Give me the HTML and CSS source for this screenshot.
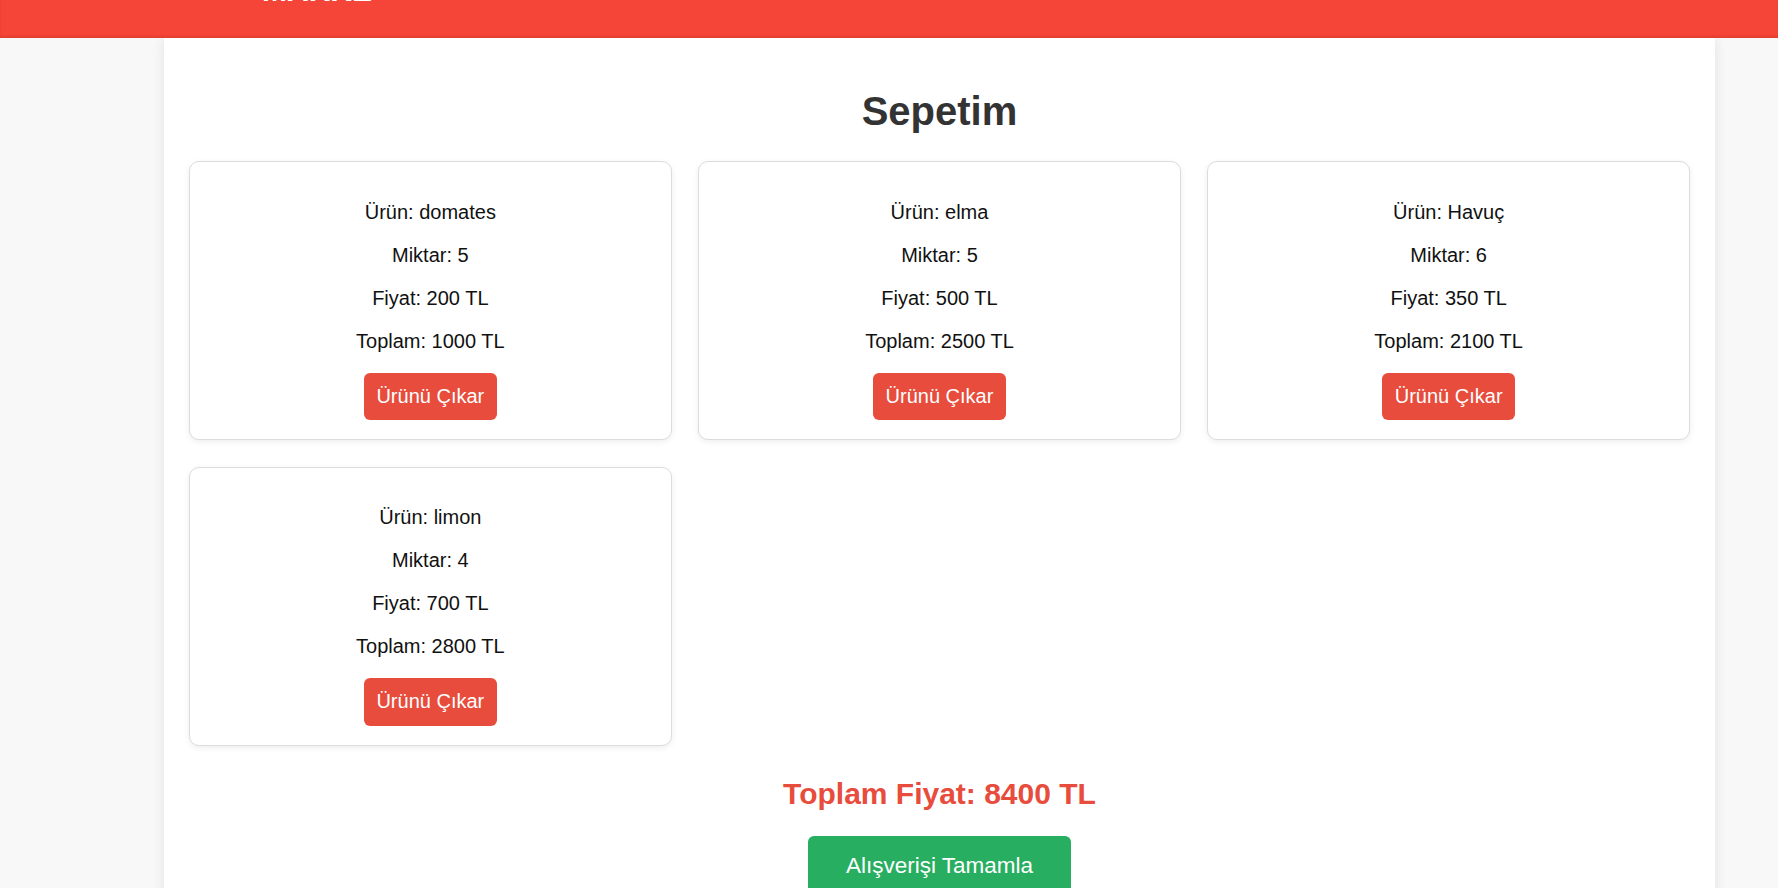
FILE: index.html
```html
<!DOCTYPE html>
<html lang="tr">
<head>
<meta charset="utf-8">
<title>Sepetim</title>
<link rel="stylesheet" href="styles.css">
</head>
<body>
<header class="site-header">
  <div class="brand">MARKETİM</div>
</header>
<main class="container">
  <h1 class="page-title">Sepetim</h1>
  <div class="cart-grid">
    <div class="cart-card">
      <p>Ürün: domates</p>
      <p>Miktar: 5</p>
      <p>Fiyat: 200 TL</p>
      <p>Toplam: 1000 TL</p>
      <button class="btn-remove">Ürünü Çıkar</button>
    </div>
    <div class="cart-card">
      <p>Ürün: elma</p>
      <p>Miktar: 5</p>
      <p>Fiyat: 500 TL</p>
      <p>Toplam: 2500 TL</p>
      <button class="btn-remove">Ürünü Çıkar</button>
    </div>
    <div class="cart-card">
      <p>Ürün: Havuç</p>
      <p>Miktar: 6</p>
      <p>Fiyat: 350 TL</p>
      <p>Toplam: 2100 TL</p>
      <button class="btn-remove">Ürünü Çıkar</button>
    </div>
    <div class="cart-card">
      <p>Ürün: limon</p>
      <p>Miktar: 4</p>
      <p>Fiyat: 700 TL</p>
      <p>Toplam: 2800 TL</p>
      <button class="btn-remove">Ürünü Çıkar</button>
    </div>
  </div>
  <h2 class="total">Toplam Fiyat: 8400 TL</h2>
  <div class="checkout-wrap">
    <button class="btn-checkout">Alışverişi Tamamla</button>
  </div>
</main>
</body>
</html>
```

FILE: styles.css
```css
html, body {
  margin: 0;
  padding: 0;
  background: #f8f8f8;
  font-family: "Liberation Sans", Arial, sans-serif;
  overflow: hidden;
}

.site-header {
  height: 38px;
  background: #f44538;
  box-shadow: inset 0 -2px 2px rgba(160, 30, 20, 0.18);
  overflow: hidden;
  position: relative;
  z-index: 2;
}

.brand {
  margin-top: -26px;
  margin-left: 262px;
  font-size: 30px;
  line-height: 34px;
  font-weight: bold;
  color: #fff;
  width: 112px;
  overflow: hidden;
  white-space: nowrap;
}

.container {
  box-sizing: border-box;
  margin: 0 63px 0 164px;
  min-height: 900px;
  background: #fff;
  padding: 0 25px 25px;
  box-shadow: 0 0 12px rgba(0, 0, 0, 0.09);
  text-align: center;
  position: relative;
  z-index: 1;
}

.page-title {
  margin: 0;
  padding-top: 50px;
  margin-bottom: 27px;
  font-size: 40px;
  line-height: 46px;
  font-weight: bold;
  color: #333;
}

.cart-grid {
  display: grid;
  grid-template-columns: repeat(3, 1fr);
  gap: 26.5px;
}

.cart-card {
  border: 1px solid #dcdcdc;
  border-radius: 10px;
  padding: 18.5px 19px 19px;
  box-shadow: 0 2px 6px rgba(0, 0, 0, 0.07);
  background: #fff;
  color: #111;
}

.cart-card p {
  margin: 20px 0;
  font-size: 20px;
  line-height: 23px;
}

.btn-remove {
  display: block;
  margin: 0 auto;
  border: none;
  border-radius: 6px;
  background: #e74c3c;
  color: #fff;
  font-family: "Liberation Sans", Arial, sans-serif;
  font-size: 20px;
  line-height: 23px;
  padding: 12px 12.5px 12.5px;
  cursor: pointer;
}

.total {
  margin: 30px 0 25px;
  font-size: 30px;
  line-height: 35px;
  font-weight: bold;
  color: #e74c3c;
}

.checkout-wrap {
  display: flex;
  justify-content: center;
}

.btn-checkout {
  border: none;
  border-radius: 6px;
  background: #27ae60;
  color: #fff;
  font-family: "Liberation Sans", Arial, sans-serif;
  font-size: 22.5px;
  line-height: 26px;
  padding: 17px 38px;
  cursor: pointer;
}
```
